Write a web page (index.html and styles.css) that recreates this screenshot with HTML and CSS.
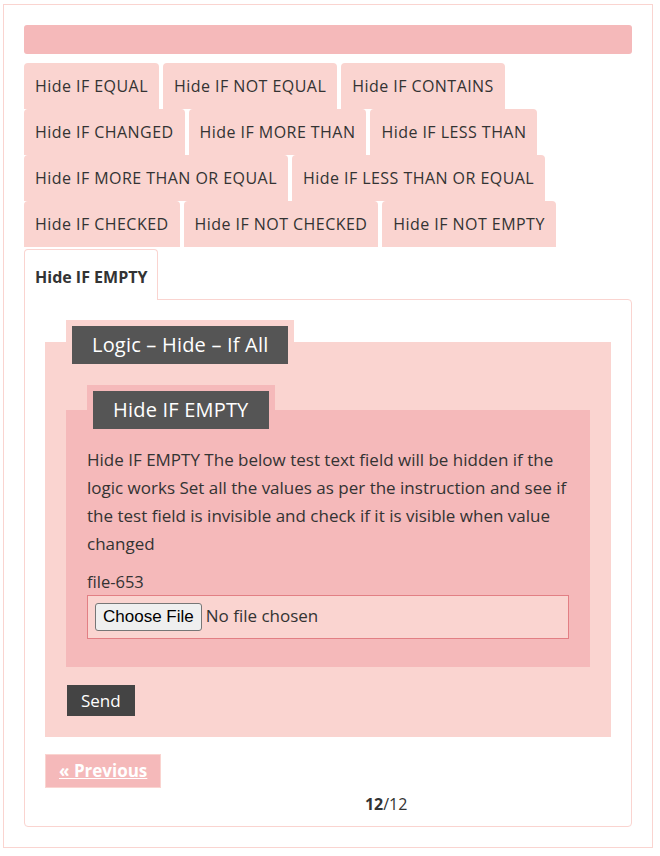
FILE: index.html
```html
<!DOCTYPE html>
<html lang="en">
<head>
    <meta charset="UTF-8">
    <meta name="viewport" content="width=device-width, initial-scale=1.0">
    <title>Hide IF EMPTY</title>
    <link rel="stylesheet" href="styles.css">
</head>
<body>
    <div class="frame">
        <div class="progress"></div>

        <ul class="tabs">
            <li class="tab">Hide IF EQUAL</li>
            <li class="tab">Hide IF NOT EQUAL</li>
            <li class="tab">Hide IF CONTAINS</li>
            <li class="tab">Hide IF CHANGED</li>
            <li class="tab">Hide IF MORE THAN</li>
            <li class="tab">Hide IF LESS THAN</li>
            <li class="tab">Hide IF MORE THAN OR EQUAL</li>
            <li class="tab">Hide IF LESS THAN OR EQUAL</li>
            <li class="tab">Hide IF CHECKED</li>
            <li class="tab">Hide IF NOT CHECKED</li>
            <li class="tab">Hide IF NOT EMPTY</li>
            <li class="tab active">Hide IF EMPTY</li>
        </ul>

        <div class="panel">
            <form class="group">
                <div class="legend"><span>Logic – Hide – If All</span></div>

                <div class="group group-inner">
                    <div class="legend"><span>Hide IF EMPTY</span></div>
                    <p class="desc">Hide IF EMPTY The below test text field will be hidden if the logic works Set all the values as per the instruction and see if the test field is invisible and check if it is visible when value changed</p>
                    <label for="file653">file-653</label>
                    <div class="file-box">
                        <input type="file" id="file653" name="file-653">
                    </div>
                </div>

                <button type="submit" class="send">Send</button>
            </form>

            <div class="pager">
                <a href="#" class="prev">« Previous</a>
                <div class="count"><strong>12</strong>/12</div>
            </div>
        </div>
    </div>
</body>
</html>
```

FILE: styles.css
```css
body {
    margin: 0;
    font-family: 'Open Sans', sans-serif;
    font-size: 16px;
    color: #333;
    background: #fff;
}
.frame {
    width: 650px;
    margin: 4px 0 0 3px;
    padding: 20px;
    border: 1px solid #fad4d0;
    box-sizing: border-box;
}
.progress {
    height: 29px;
    background: #f5b9ba;
    border-radius: 3px;
    margin-bottom: 9px;
}
.tabs {
    list-style: none;
    margin: 0;
    padding: 0;
    display: flex;
    flex-wrap: wrap;
}
.tab {
    background: #fad4d0;
    padding: 11px;
    line-height: 24px;
    letter-spacing: 0.45px;
    margin-right: 4px;
    border-radius: 4px 4px 0 0;
}
.tab.active {
    position: relative;
    z-index: 1;
    background: #fff;
    font-weight: 700;
    letter-spacing: 0;
    border: 1px solid #fad4d0;
    border-bottom: 0;
    margin-top: 2px;
    margin-bottom: -1px;
    padding: 15px 10px 11px;
}
.panel {
    border: 1px solid #fad4d0;
    border-radius: 0 4px 4px 4px;
    padding: 20px 20px 10px;
}
.group {
    display: flow-root;
    margin: 22px 0 0;
    padding: 0 21px 20px;
    background: #fad4d0;
}
.legend {
    display: table;
    margin-top: -22px;
    padding: 6px;
    background: #fad4d0;
}
.legend span {
    display: block;
    background: #555;
    color: #fff;
    font-size: 20px;
    letter-spacing: 0.2px;
    line-height: 38px;
    padding: 0 20px;
}
.group-inner {
    margin-top: 40px;
    padding-bottom: 28px;
    background: #f5b9ba;
}
.group-inner .legend {
    margin-top: -25px;
    background: #f5b9ba;
}
.desc {
    margin: 11px 0 12px;
    font-size: 17px;
    line-height: 28px;
}
label {
    display: block;
    font-size: 16.5px;
    line-height: 24px;
    margin-bottom: 1px;
}
.file-box {
    border: 1px solid #e27f84;
    background: #fad4d0;
    padding: 7px;
}
.file-box input {
    font-family: 'Open Sans', sans-serif;
    font-size: 17px;
    color: #333;
}
.file-box input::file-selector-button {
    font-family: 'Liberation Sans', Arial, sans-serif;
    font-size: 17px;
    color: #000;
    background: #efefef;
    border: 1px solid #767676;
    border-radius: 3px;
    padding: 3px 7px;
    margin-right: 4px;
}
.send {
    margin-top: 17px;
    background: #444;
    color: #fff;
    border: 1px solid #fad4d0;
    font-family: 'Open Sans', sans-serif;
    font-size: 17px;
    line-height: 31px;
    padding: 0 14px;
}
.pager {
    display: flex;
    align-items: flex-start;
    margin-top: 17px;
}
.prev {
    background: #f5b9ba;
    border: 1px solid #fad4d0;
    color: #fff;
    font-size: 17px;
    font-weight: 700;
    line-height: 32px;
    padding: 0 13px;
}
.count {
    flex: 1;
    text-align: center;
    margin-top: 38px;
    line-height: 24px;
}
```
